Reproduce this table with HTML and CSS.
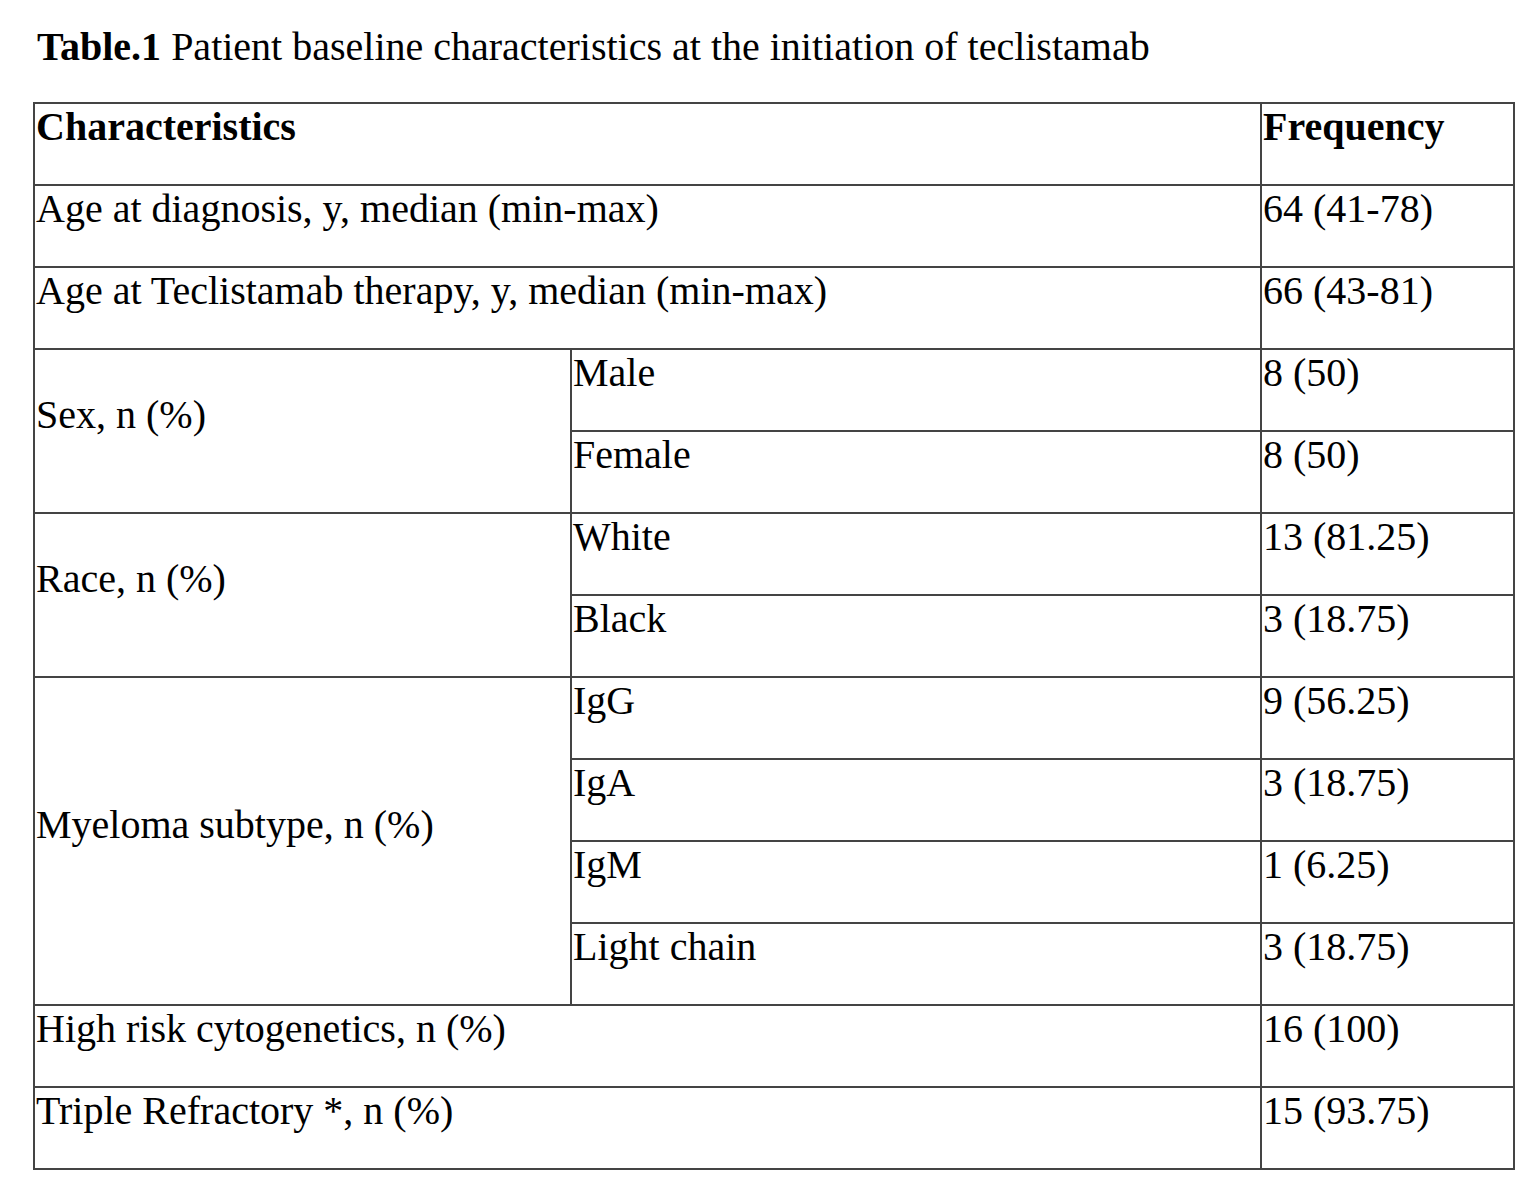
FILE: index.html
```html
<!DOCTYPE html>
<html>
<head>
<meta charset="utf-8">
<link rel="stylesheet" href="styles.css">
</head>
<body>
<div class="page">
  <p class="caption"><b>Table.1</b> Patient baseline characteristics at the initiation of teclistamab</p>
  <table class="tbl">
    <colgroup>
      <col class="c1"><col class="c2"><col class="c3">
    </colgroup>
    <tr><th colspan="2">Characteristics</th><th>Frequency</th></tr>
    <tr><td colspan="2">Age at diagnosis, y, median (min-max)</td><td>64 (41-78)</td></tr>
    <tr><td colspan="2">Age at Teclistamab therapy, y, median (min-max)</td><td>66 (43-81)</td></tr>
    <tr><td rowspan="2" class="mid">Sex, n (%)</td><td>Male</td><td>8 (50)</td></tr>
    <tr><td>Female</td><td>8 (50)</td></tr>
    <tr><td rowspan="2" class="mid">Race, n (%)</td><td>White</td><td>13 (81.25)</td></tr>
    <tr><td>Black</td><td>3 (18.75)</td></tr>
    <tr><td rowspan="4" class="mid">Myeloma subtype, n (%)</td><td>IgG</td><td>9 (56.25)</td></tr>
    <tr><td>IgA</td><td>3 (18.75)</td></tr>
    <tr><td>IgM</td><td>1 (6.25)</td></tr>
    <tr><td>Light chain</td><td>3 (18.75)</td></tr>
    <tr><td colspan="2">High risk cytogenetics, n (%)</td><td>16 (100)</td></tr>
    <tr><td colspan="2">Triple Refractory *, n (%)</td><td>15 (93.75)</td></tr>
  </table>
</div>
</body>
</html>
```
FILE: styles.css
```css
html, body {
  margin: 0;
  padding: 0;
  background: #ffffff;
}
.page {
  padding: 24px 0 0 33px;
  font-family: "Liberation Serif", "Times New Roman", serif;
  color: #000;
}
.caption {
  margin: 0 0 32px 4px;
  font-size: 40px;
  line-height: 46px;
}
.tbl {
  border-collapse: collapse;
  width: 1482px;
  table-layout: fixed;
  font-size: 40px;
}
.c1 { width: 537px; }
.c2 { width: 690px; }
.c3 { width: 253px; }
.tbl th, .tbl td {
  border: 2px solid #444;
  height: 82px;
  padding: 0 0 0 1px;
  text-align: left;
  vertical-align: top;
  line-height: 46px;
  box-sizing: border-box;
}
.tbl th {
  font-weight: bold;
}
.tbl td.mid {
  vertical-align: middle;
  padding-bottom: 32px;
}
```
